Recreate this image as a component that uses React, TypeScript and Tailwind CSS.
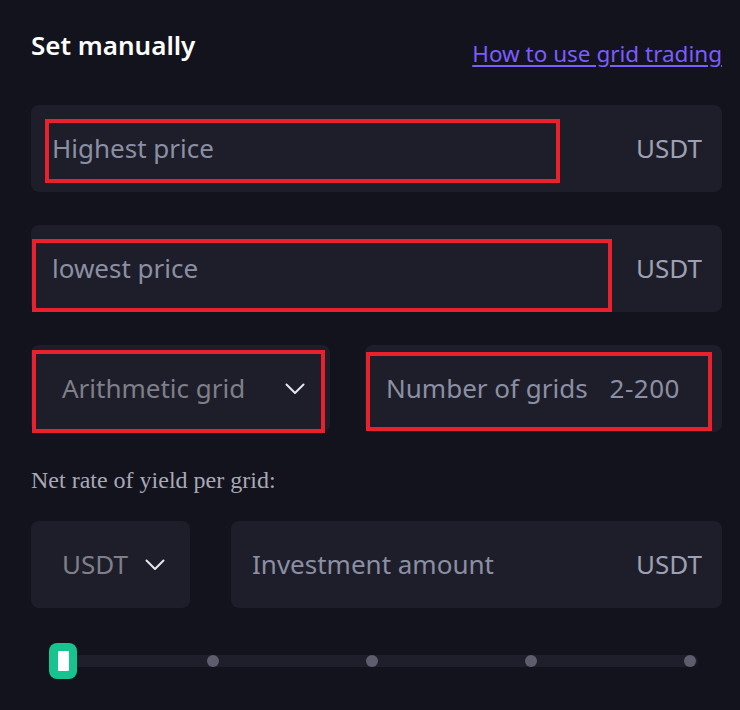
const sans = { fontFamily: '"Noto Sans", Inter, sans-serif' };

function Mark({ className }: { className: string }) {
  // red annotation frame drawn over the field
  return <div className={`absolute border-[4px] border-[#e8212c] pointer-events-none ${className}`} />;
}

function Chevron() {
  return (
    <svg width="20" height="12" viewBox="0 0 20 12" fill="none" className="shrink-0">
      <path d="M1.5 1.5 L10 10 L18.5 1.5" stroke="#e6e6ea" strokeWidth="2" strokeLinecap="round" strokeLinejoin="round" />
    </svg>
  );
}

export default function App() {
  const dots = [213, 372, 531, 690];
  return (
    <div className="min-h-screen w-[740px] bg-[#13131d] pl-[31px] pr-[18px] pt-[26px]" style={sans}>
      <div className="flex items-end justify-between h-[42px]">
        <h2 className="text-[26px] font-semibold text-white leading-[34px] mb-[6px]">Set manually</h2>
        <a href="#" className="text-[22.5px] leading-[30px] text-[#7c5cff] underline underline-offset-[3px] -mb-[1px]">
          How to use grid trading
        </a>
      </div>

      <div className="relative mt-[37px] h-[87px] rounded-[8px] bg-[#1e1e2a] flex items-center justify-between pl-[21px] pr-[20px]">
        <span className="text-[26px] text-[#8b8fa3]">Highest price</span>
        <span className="text-[26px] text-[#9da0b2]">USDT</span>
        <Mark className="left-[14px] top-[14px] w-[515px] h-[64px]" />
      </div>

      <div className="relative mt-[33px] h-[87px] rounded-[8px] bg-[#1e1e2a] flex items-center justify-between pl-[21px] pr-[20px]">
        <span className="text-[26px] text-[#8b8fa3]">lowest price</span>
        <span className="text-[26px] text-[#9da0b2]">USDT</span>
        <Mark className="left-[1px] top-[14px] w-[580px] h-[73px]" />
      </div>

      <div className="mt-[33px] flex gap-[35px]">
        <div className="relative w-[299px] h-[87px] rounded-[8px] bg-[#1e1e2a] flex items-center justify-between pl-[31px] pr-[25px]">
          <span className="text-[26px] text-[#7e7f88]">Arithmetic grid</span>
          <Chevron />
          <Mark className="left-[1px] top-[5px] w-[293px] h-[83px]" />
        </div>
        <div className="relative flex-1 h-[87px] rounded-[8px] bg-[#1e1e2a] flex items-center pl-[21px] gap-[22px]">
          <span className="text-[26px] text-[#8b8fa3]">Number of grids</span>
          <span className="text-[26px] text-[#8b8fa3] tracking-[0.5px]">2-200</span>
          <Mark className="left-[1px] top-[7px] w-[346px] h-[79px]" />
        </div>
      </div>

      <p className="mt-[33px] text-[24px] leading-[30px] text-[#a9a9b6]" style={{ fontFamily: '"Liberation Serif", serif' }}>
        Net rate of yield per grid:
      </p>

      <div className="mt-[26px] flex gap-[41px]">
        <div className="w-[159px] h-[87px] rounded-[8px] bg-[#1e1e2a] flex items-center pl-[31px] gap-[17px]">
          <span className="text-[26px] text-[#7e7f88]">USDT</span>
          <Chevron />
        </div>
        <div className="flex-1 h-[87px] rounded-[8px] bg-[#1e1e2a] flex items-center justify-between pl-[21px] pr-[20px]">
          <span className="text-[26px] text-[#8b8fa3]">Investment amount</span>
          <span className="text-[26px] text-[#9da0b2]">USDT</span>
        </div>
      </div>

      <div className="relative mt-[35px] h-[36px] w-[668px] ml-[18px]">
        <div className="absolute left-[10px] right-[19px] top-[12px] h-[12px] rounded-full bg-[#1f1f2b]" />
        {dots.map((x) => (
          <div
            key={x}
            className="absolute top-[12px] w-[12px] h-[12px] rounded-full bg-[#5c5d6d]"
            style={{ left: x - 49 - 6 }}
          />
        ))}
        <div className="absolute left-0 top-0 w-[28px] h-[36px] rounded-[8px] bg-[#17c38f] flex items-center justify-center">
          <div className="w-[11px] h-[20px] bg-white rounded-[1px]" />
        </div>
      </div>
    </div>
  );
}
